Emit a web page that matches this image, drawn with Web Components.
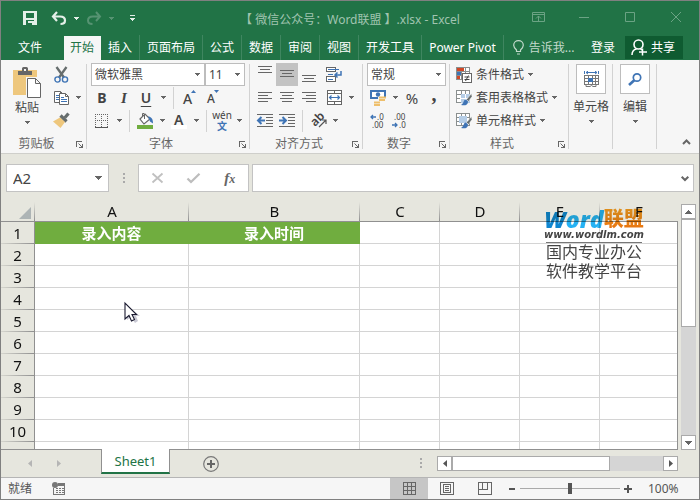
<!DOCTYPE html>
<html lang="zh-CN">
<head>
<meta charset="utf-8">
<title>【 微信公众号：Word联盟 】.xlsx - Excel</title>
<style>
html,body{height:100%;margin:0}
body{font:12px/16px "Noto Sans","Noto Sans CJK SC",sans-serif;color:#444;overflow:hidden}
</style>
</head>
<body>
<excel-window>
  <title-bar slot="title">【 微信公众号：Word联盟 】.xlsx - Excel</title-bar>
  <ribbon-tabs slot="tabs"></ribbon-tabs>
  <excel-ribbon slot="ribbon"></excel-ribbon>
  <formula-bar slot="formula"></formula-bar>
  <sheet-view slot="sheet"></sheet-view>
  <sheet-tabs slot="sheets"></sheet-tabs>
  <status-bar slot="status"></status-bar>
</excel-window>

<script>
const H = 'shape-rendering="crispEdges"';
const lines = (rows, x = 0) => `<path ${H} stroke="#666" d="${rows.map(([y, a, b]) => `M${a + x} ${y + .5}H${b + x}`).join('')}"/>`;
const doc = '<path d="M.5.5h6l3 3v8h-9z" fill="#fff" stroke="#666"/><path d="M6.500.5v3h3" fill="none" stroke="#666"/><path d="M2 4.500h3M2 6.500h6M2 8.500h6" stroke="#3f74b5"/>';
const table = '<path '+H+' d="M.5.500h13v12h-13zM.5 4.500h13M.5 8.500h13M5.500.5v12M9.500.5v12" fill="#fff" stroke="#8a8f8f"/>';
const brush = '<path d="M15.500 3.500l-5 6 2 2 3.500-5z" fill="#666d6d" stroke="#fff" stroke-width=".5"/><path d="M10 9.500c-3 .5-2 4-5 5.500 4 1 7 0 7-3.500z" fill="#3f74b5"/>';
const ICONS = {
  caret: [5, 3, '<path d="M0 0h5v1H4v1H3v1H2V2H1V1H0z" fill="currentColor" shape-rendering="crispEdges"/>'],
  save: [14, 14, '<path d="M0 0h14v14H0z" fill="#e4efe8"/><path d="M3 2h8v5H3zM3 9h8v5H3z" fill="#217346"/><path d="M5 10h6v4H7v-2H5z" fill="#e4efe8"/><path d="M7 12h2v2H7zM3 9h8v1H3z" fill="#217346"/>'],
  undo: [14, 13, '<path d="M5 0L1 4.500l4 4.500M1.500 4.500H8c3 0 5 1.500 5 4 0 2-1.500 3.500-4.500 3.500" fill="none" stroke="currentColor" stroke-width="2.200"/>'],
  redo: [14, 13, '<path d="M9 0l4 4.500L9 9M12.500 4.500H6c-3 0-5 1.500-5 4C1 10.500 2.500 12 5.500 12" fill="none" stroke="currentColor" stroke-width="2"/>'],
  custom: [5, 6, '<path d="M0 0h5v1H0zM0 3h5v1H4v1H3v1H2V5H1V4H0z" fill="currentColor" shape-rendering="crispEdges"/>'],
  display: [13, 10, '<path d="M.5.500h12v9H.5zM.5 2.500h12M6.500 4v5M4 6.500L6.500 4 9 6.500" fill="none" stroke="currentColor"/>'],
  min: [10, 10, '<path d="M0 5.500h10" stroke="currentColor"/>'],
  max: [10, 10, '<path d="M.5.500h9v9H.5z" fill="none" stroke="currentColor"/>'],
  close: [10, 10, '<path d="M0 0l10 10M10 0L0 10" stroke="currentColor"/>'],
  bulb: [11, 15, '<path d="M3.500 11.500V10C2 8.500.7 7 .7 5.200a4.800 4.500 0 0 1 9.600 0C10.300 7 9 8.500 7.500 10v1.500zM4 14h3" fill="none" stroke="currentColor" stroke-width="1.200"/>'],
  share: [16, 17, '<circle cx="7.500" cy="5.500" r="4.500" fill="none" stroke="#fff" stroke-width="1.600"/><path d="M1 16c0-3.500 2-5.500 4.500-6M9.500 10l1.500 1M11.500 9.500v7M8 13h8" fill="none" stroke="#fff" stroke-width="1.500"/>'],
  paste: [28, 31, '<path d="M0 3h24v25H0z" fill="#eec77d"/><path d="M5 8V4h4V1.500Q9 0 10.500 0h3Q15 0 15 1.500V4h4v4z" fill="#666"/><path d="M11 2h2v2h-2z" fill="#f6f6f6"/><path d="M13 10h11l5 5v17H13z" fill="#f6f6f6"/><path d="M14.500 11.500h8l5 5v14h-13zM22.500 11.500v5h5" fill="#fff" stroke="#666"/>'],
  cut: [15, 16, '<path d="M2.500 0L10 10.500M12.500 0L5 10.500" stroke="#666d6d" stroke-width="2.300"/><circle cx="3.500" cy="12.500" r="2.600" fill="none" stroke="#3f74b5" stroke-width="1.400"/><circle cx="11" cy="12.500" r="2.600" fill="none" stroke="#3f74b5" stroke-width="1.400"/>'],
  copy: [15, 14, `${doc}<g transform="translate(5 2)">${doc}</g>`],
  painter: [16, 15, '<path d="M15.500.5l-3.500 4M7.500 2.500l6 6" stroke="#666d6d" stroke-width="3.200"/><path d="M7 4.500L0 8.500l7.500 6.500 4.500-6z" fill="#eec77d"/>'],
  border: [14, 14, '<path '+H+' d="M.5 0v13M6.500 0v13M12.500 0v13M0 .5h13M0 6.500h13" stroke="#666" stroke-dasharray="1 1"/><path '+H+' d="M0 13.500h13" stroke="#555"/>'],
  fill: [17, 16, '<path d="M3 6l5-5 5 5-6 5z" fill="#fff" stroke="#666" stroke-width="1.200"/><path d="M7.500 6V1.500q0-1.500-2-1V4" fill="none" stroke="#666"/><path d="M11 3.500c3 0 5 2 5 7l-3-2z" fill="#3f74b5"/><path '+H+' d="M0 12h16v4H0z" fill="#70ad3f"/>'],
  grow: [14, 15, '<text x="0" y="14" font-size="14" font-weight="500" fill="#444">A</text><path d="M8 3l2.500-3L13 3z" fill="#3f74b5"/>'],
  shrink: [14, 15, '<text x="0" y="13" font-size="12" font-weight="500" fill="#444">A</text><path d="M7 0h5L9.500 3z" fill="#3f74b5"/>'],
  fontcolor: [16, 16, '<path d="M0 12h16v4H0z" fill="#fff"/><text x="3" y="12" font-size="14" fill="#444" font-weight="600">A</text>'],
  top: [14, 17, lines([[0,0,14],[3,2,12],[6,0,14]])],
  middle: [14, 17, lines([[4,0,14],[7,2,12],[10,0,14]])],
  bottom: [14, 17, lines([[9,0,14],[12,2,12],[15,0,14]])],
  left: [14, 11, lines([[0,0,14],[3,0,10],[6,0,14],[9,0,10]])],
  center: [14, 11, lines([[0,0,14],[3,2,12],[6,0,14],[9,2,12]])],
  right: [14, 11, lines([[0,0,14],[3,4,14],[6,0,14],[9,4,14]])],
  outdent: [16, 13, lines([[0,0,16],[3,9,16],[6,9,16],[9,9,16],[12,0,16]])+'<path d="M8 6.500H1M4.500 3L1 6.500 4.500 10" fill="none" stroke="#3f74b5" stroke-width="2"/>'],
  indent: [16, 13, lines([[0,0,16],[3,9,16],[6,9,16],[9,9,16],[12,0,16]])+'<path d="M0 6.500h7M3.500 3L7 6.500 3.500 10" fill="none" stroke="#3f74b5" stroke-width="2"/>'],
  wrap: [16, 15, '<path '+H+' d="M.5.500h9v4h-9zM.5 9.500h9v5h-9z" fill="#fff" stroke="#666"/><path '+H+' d="M2 2.500h11M2 7.500h5M2 12.500h5" stroke="#3f74b5"/><path d="M15 4v4H9M11.500 5.500L9 8l2.500 2.500" fill="none" stroke="#3f74b5" stroke-width="1.500"/>'],
  merge: [15, 15, '<path '+H+' d="M.5.500h14v14H.5zM0 3.500h15M0 11.500h15M7.500 0v3M7.500 12v3" fill="#fff" stroke="#666"/><path d="M2.500 7.500h10M4.500 5.500l-2 2 2 2M10.500 5.500l2 2-2 2" fill="none" stroke="#3f74b5" stroke-width="1.200"/>'],
  orient: [17, 15, '<text x="0" y="0" font-size="12" fill="#444" font-weight="600" transform="translate(5 14) rotate(-45)">ab</text><path d="M9 14l7-7M12 7h4v4" fill="none" stroke="#555" stroke-width="1.200"/>'],
  money: [16, 16, '<path '+H+' d="M0 0h16v9H0z" fill="#3f74b5"/><path d="M2 2h12v5H2z" fill="#fff"/><circle cx="8" cy="4.500" r="2.200" fill="#3f74b5"/><path d="M8 7h8v8H5v-4h3z" fill="#f6f6f6"/><path d="M9 7.500h7M9 10h6M4 12.500h6M4 15h6" stroke="#eebf6c" stroke-width="1.800"/>'],
  decup: [16, 14, '<text x="7" y="6" font-size="8" fill="#444">.0</text><text x="2" y="14" font-size="8" fill="#444">.00</text><path d="M6 3H1M3 1L1 3l2 2" fill="none" stroke="#3f74b5" stroke-width="1.300"/>'],
  decdown: [16, 14, '<text x="2" y="6" font-size="8" fill="#444">.00</text><text x="7" y="14" font-size="8" fill="#444">.0</text><path d="M0 11h5M3 9l2 2-2 2" fill="none" stroke="#3f74b5" stroke-width="1.300"/>'],
  cond: [16, 16, table+'<path d="M1 1h7v3H1zM1 9h3v3H1z" fill="#d24726"/><path d="M1 5h4v3H1z" fill="#3f74b5"/><path '+H+' d="M6.500 6.500h9v9h-9z" fill="#fff" stroke="#666"/><path d="M8.500 10h5M8.500 12.500h5M12.500 8.500l-3 5.500" stroke="#444"/>'],
  tablefmt: [16, 16, table+'<path d="M5 4h9v9H5z" fill="#b5cde6"/><path '+H+' d="M4 8.500h9M9.500 4v9" stroke="#fff"/>'+brush],
  cellfmt: [16, 16, table+'<path d="M3 3h8v7H3z" fill="#b5cde6"/>'+brush],
  cells: [15, 17, '<path d="M.5 0v3M14.500 0v3M2 1.500h11M4 .2L2 1.500 4 3M11 .2l2 1.300L11 3" fill="none" stroke="#3f74b5"/><path '+H+' d="M.5 4.500h14v9H.5zM.5 7.500h14M.5 10.500h14M4.500 4.500v9M8.500 4.500v9M11.500 4.500v9" fill="#fff" stroke="#777"/><path d="M4 7h5v4H4z" fill="#3f74b5"/><path d="M2 13v2.500h4l1.500-1 1.500 1h3V13" fill="none" stroke="#777"/>'],
  find: [14, 13, '<circle cx="9" cy="4.500" r="3.700" fill="#fff" stroke="#3f74b5" stroke-width="1.700"/><path d="M6.300 7.200L1 12" stroke="#3f74b5" stroke-width="2.600"/>'],
  launcher: [7, 7, '<path '+H+' d="M.5 6V.5H6M6.500 3v4M3 6.500h4M5.500 5v1" fill="none" stroke="#666"/><path d="M2.500 2.500l3.500 3.500" stroke="#666"/>'],
  collapse: [9, 6, '<path d="M1 5l3.500-3.500L8 5" fill="none" stroke="#666" stroke-width="2"/>'],
  expand: [8, 5, '<path d="M.7.700L4 4 7.300.7" fill="none" stroke="#666" stroke-width="2"/>'],
  cancel: [11, 10, '<path d="M.5.500l10 9M10.500.5l-10 9" stroke="#c0c0c0" stroke-width="1.800"/>'],
  enter: [13, 10, '<path d="M.5 5.500l3.500 3.500L12.500.7" fill="none" stroke="#bdbdbd" stroke-width="2.300"/>'],
  dots: [2, 11, '<path d="M0 0h2v2H0zM0 4h2v2H0zM0 8h2v2H0z" fill="#aaa"/>'],
  corner: [12, 12, '<path d="M12 0v12H0z" fill="#adb4b5"/>'],
  up: [7, 4, '<path d="M3 0h1v1h1v1h1v1h1v1H0V3h1V2h1V1h1z" fill="#666" shape-rendering="crispEdges"/>'],
  down: [7, 4, '<path d="M3 4h1V3h1V2h1V1h1V0H0v1h1v1h1v1h1z" fill="#666" shape-rendering="crispEdges"/>'],
  prev: [4, 7, '<path d="M4 0v7L0 3.500z" fill="currentColor"/>'],
  next: [4, 7, '<path d="M0 0v7l4-3.500z" fill="currentColor"/>'],
  add: [16, 16, '<circle cx="8" cy="8" r="7.300" fill="none" stroke="#777" stroke-width="1.200"/><path d="M4 8h8M8 4v8" stroke="#666" stroke-width="2"/>'],
  macro: [13, 13, '<path '+H+' d="M6 1h7v3H6z" fill="#777"/><path '+H+' d="M1.500 6v6.500h11V4" fill="none" stroke="#777"/><circle cx="3" cy="3" r="3" fill="#777"/><path '+H+' d="M4 6.500h8M4 8.500h8M4 10.500h8" stroke="#777" stroke-dasharray="2 1"/>'],
  normal: [13, 13, '<path '+H+' d="M.5.500h12v12H.5zM.5 4.500h12M.5 8.500h12M4.500.5v12M8.500.5v12" fill="none" stroke="#666"/>'],
  layout: [14, 13, '<path '+H+' d="M.5.500h13v12H.5zM3.500 2.500h7v8h-7zM5 4.500h4M5 6.500h4M5 8.500h4" fill="none" stroke="#666"/>'],
  pagebreak: [14, 13, '<path '+H+' d="M.5.500h13v12H.5zM4.500.5v7M9.500.5v7M.5 7.500h9" fill="none" stroke="#666"/>'],
  minus: [8, 8, '<path '+H+' d="M1 3h6v2H1z" fill="#555"/>'],
  plus: [8, 8, '<path '+H+' d="M0 3h8v2H0zM3 0h2v8H3z" fill="#555"/>'],
  pointer: [18, 24, '<path d="M3 4v14l4-3 4 6 3-2-2-5h4z" fill="#8888a0" opacity=".45"/><path d="M1 1v16l4-3.500 2.500 5.500 3-1.500L8 12.500h4.500z" fill="#fff" stroke="#1a1a30" stroke-width="1.100"/>']
};

customElements.define('x-icon', class extends HTMLElement {
  connectedCallback() {
    const [w, h, body] = ICONS[this.getAttribute('name')];
    this.attachShadow({mode: 'open'}).innerHTML =
      `<style>:host{display:inline-flex;flex:none}svg{display:block;overflow:visible}</style>
       <svg width="${w}" height="${h}" viewBox="0 0 ${w} ${h}" aria-hidden="true">${body}</svg>`;
  }
});
const icon = name => `<x-icon name="${name}"></x-icon>`;
const RESET = `:host,*{box-sizing:border-box}button,input,select{font:inherit;color:inherit;margin:0;padding:0;border:0;border-radius:0;background:none;outline:none}`;
const define = (name, html) => {
  const tpl = document.createElement('template');
  tpl.innerHTML = `<style>${RESET}</style>${html}`;
  customElements.define(name, class extends HTMLElement {
    constructor() { super(); this.attachShadow({mode: 'open'}).append(tpl.content.cloneNode(true)); }
    connectedCallback() {
      const label = this.getAttribute('label'), b = this.shadowRoot.querySelector('[data-label]');
      if (label && b) b.setAttribute('aria-label', label);
    }
  });
};

/* Ribbon pieces */
define('tool-button', `<style>
:host{display:flex;width:22px;height:23px}
:host([wide]){width:auto}:host([big]){width:auto;height:auto}:host([arrow]){width:12px}:host([large]){width:24px}
:host([active]){background:#c3c3c3}
button{display:flex;flex:1;align-items:center;justify-content:center;gap:4px;white-space:nowrap}
:host([big]) button{flex-direction:column;justify-content:flex-start}
</style><button data-label><slot></slot></button>`);

define('tool-row', `<style>:host{display:flex;height:23px;align-items:center}</style><slot></slot>`);
define('tool-rule', `<style>:host{width:1px;height:22px;margin:0 4px;background:#d2d2d2}</style>`);
define('ribbon-group', `<style>
:host{display:flex;flex-direction:column;position:relative;padding-top:3px}
:host::after{content:"";position:absolute;right:0;top:4px;bottom:4px;width:1px;background:#d2d2d2}
.body{height:69px;display:flex;padding:0 4px}
footer{height:21px;display:flex;align-items:center;color:#666}
.name{flex:1;text-align:center;padding-top:2px}
button{width:14px;height:16px;display:flex;align-items:center;justify-content:center;margin-right:1px}
footer button{padding-top:4px}
:host([plain]) button{display:none}:host([plain]) .body{justify-content:center}
</style><div class="body"><slot></slot></div>
<footer><span class="name"><slot name="name"></slot></span><button aria-label="对话框启动器">${icon('launcher')}</button></footer>`);

customElements.define('drop-down', class extends HTMLElement {
  connectedCallback() {
    this.attachShadow({mode: 'open'}).innerHTML = `<style>${RESET}
:host{display:flex;height:23px;position:relative;color:#444}
select{width:100%;height:100%;padding:0 16px 0 3px;appearance:none;background:#fff;border:1px solid #bdbdbd}
x-icon{position:absolute;right:5px;top:10px;color:#666;pointer-events:none}
</style><select aria-label="${this.getAttribute('label')}"><option>${this.getAttribute('value')}</option></select>${icon('caret')}`;
  }
});

const tb = (label, name, attrs = '') => `<tool-button label="${label}" ${attrs}>${icon(name)}</tool-button>`;
const arrow = label => tb(label + '选项', 'caret', 'arrow');

define('title-bar', `<style>
:host{display:grid;grid-template-columns:1fr auto 1fr;align-items:center;height:34px;background:#217346;color:#a0c4b0;white-space:pre;padding-top:2px}
.quick{display:flex;align-items:center;padding-left:18px;padding-bottom:4px;color:#e4efe8}
.quick button{width:22px;height:24px;display:flex;align-items:center;justify-content:center}
.quick .arrow{width:13px}.quick .gap{margin-left:7px}.quick .dim{color:#569372}
.quick .more{margin-left:8px}
.frame{display:flex;justify-content:flex-end;color:#6ba384;padding-bottom:6px}
.frame button{width:46px;height:28px;display:flex;align-items:center;justify-content:center}
</style>
<div class="quick"><button aria-label="保存">${icon('save')}</button><button class="gap" aria-label="撤消">${icon('undo')}</button><button class="arrow" aria-label="撤消列表">${icon('caret')}</button><button class="dim" aria-label="恢复">${icon('redo')}</button><button class="arrow dim" aria-label="恢复列表">${icon('caret')}</button><button class="more arrow" aria-label="自定义快速访问工具栏">${icon('custom')}</button></div>
<span><slot></slot></span>
<div class="frame"><button aria-label="功能区显示选项">${icon('display')}</button><button aria-label="最小化">${icon('min')}</button><button aria-label="最大化">${icon('max')}</button><button aria-label="关闭">${icon('close')}</button></div>`);

define('ribbon-tabs', `<style>
:host{display:flex;height:25px;background:#217346;color:#fff;padding-right:16px}
nav{display:flex;padding-left:10px}
button{display:flex;align-items:center;gap:5px;white-space:nowrap}
nav button{padding:0 7px;border-right:1px solid #3f8660}
nav .file{width:53px;border:0;padding:0 7px}
nav .on{background:#f6f6f6;color:#217346;border:0;margin-top:1px;padding-left:6px}
.tell{margin-left:9px;color:#c3dacc}.login{margin-left:auto;margin-right:10px}
.share{background:#0f5b31;padding:0 8px 0 6px;margin-top:1px;margin-bottom:1px;gap:4px}
</style><nav><button class="file">文件</button><button class="on">开始</button><button>插入</button><button>页面布局</button><button>公式</button><button>数据</button><button>审阅</button><button>视图</button><button>开发工具</button><button>Power Pivot</button></nav>
<button class="tell">${icon('bulb')}告诉我...</button><button class="login">登录</button><button class="share">${icon('share')}共享</button>`);

define('excel-ribbon', `<style>
:host{display:flex;height:94px;background:#f6f6f6;border-bottom:1px solid #cfcfcb;color:#444}
x-icon[name=caret]{color:#666}
.clip{width:86px}.font{width:163px}.align{width:113px}.num{width:87px}.style{width:119px}.one{width:44px}
.col{display:flex;flex-direction:column}
.big{margin-left:8px;margin-right:9px;width:28px;padding-top:4px}
.label{height:16px}
.font .name{width:114px}.font .size{width:40px}
.num drop-down{width:79px}
b,i,u{font-size:14px}i{font-family:"Liberation Serif",serif;font-weight:bold;font-size:15px}u{font-weight:600;text-underline-offset:3px}
.pinyin{display:flex;flex-direction:column;align-items:center;font-size:10px;line-height:11px}
.pinyin span+span{color:#3f74b5;font-weight:bold}
.sign{font-size:15px}.comma{font:bold 20px/10px "Liberation Serif",serif;height:18px}
.gap{margin-left:3px}
.style tool-row{padding-left:2px}
.box{display:flex;width:30px;height:30px;align-items:center;justify-content:center;background:#fff;border:1px solid #bdbdbd}
.tile{display:flex;flex-direction:column;align-items:center;gap:5px;padding-top:1px}
.paste{display:flex;flex-direction:column;align-items:center;gap:2px}
.paste x-icon[name=caret]{margin-top:3px}
.end{margin-left:auto;align-self:flex-end;padding:0 4px 0 0}
</style>
<ribbon-group class="clip">
  <tool-button class="big" big label="粘贴"><span class="paste">${icon('paste')}<span class="label">粘贴</span>${icon('caret')}</span></tool-button>
  <div class="col"><tool-row>${tb('剪切','cut')}</tool-row><tool-row>${tb('复制','copy')}${arrow('复制')}</tool-row><tool-row>${tb('格式刷','painter')}</tool-row></div>
  <span slot="name">剪贴板</span>
</ribbon-group>
<ribbon-group class="font"><div class="col">
  <tool-row><drop-down class="name" label="字体" value="微软雅黑"></drop-down><drop-down class="size" label="字号" value="11"></drop-down></tool-row>
  <tool-row><tool-button label="加粗"><b>B</b></tool-button><tool-button label="倾斜"><i>I</i></tool-button><tool-button label="下划线"><u>U</u></tool-button>${arrow('下划线')}<tool-rule></tool-rule>${tb('增大字号','grow','large')}${tb('减小字号','shrink','large')}</tool-row>
  <tool-row>${tb('边框','border')}${arrow('边框')}<tool-rule></tool-rule>${tb('填充颜色','fill')}${arrow('填充颜色')}${tb('字体颜色','fontcolor')}${arrow('字体颜色')}<tool-rule></tool-rule><tool-button label="拼音"><span class="pinyin"><span>wén</span><span>文</span></span></tool-button>${arrow('拼音')}</tool-row></div>
  <span slot="name">字体</span>
</ribbon-group>
<ribbon-group class="align"><div class="col">
  <tool-row>${tb('顶端对齐','top')}${tb('垂直居中','middle','active')}${tb('底端对齐','bottom')}${tb('自动换行','wrap','class="gap"')}</tool-row>
  <tool-row>${tb('左对齐','left')}${tb('居中','center')}${tb('右对齐','right')}${tb('合并后居中','merge','class="gap"')}${arrow('合并')}</tool-row>
  <tool-row>${tb('减少缩进','outdent')}${tb('增加缩进','indent')}<tool-rule></tool-rule>${tb('方向','orient')}${arrow('方向')}</tool-row></div>
  <span slot="name">对齐方式</span>
</ribbon-group>
<ribbon-group class="num"><div class="col">
  <tool-row><drop-down label="数字格式" value="常规"></drop-down></tool-row>
  <tool-row>${tb('会计数字格式','money')}${arrow('会计数字格式')}<tool-button label="百分比样式"><span class="sign">%</span></tool-button><tool-button label="千位分隔样式"><span class="comma">,</span></tool-button></tool-row>
  <tool-row>${tb('增加小数位数','decup')}${tb('减少小数位数','decdown')}</tool-row></div>
  <span slot="name">数字</span>
</ribbon-group>
<ribbon-group class="style"><div class="col">
  <tool-row><tool-button wide>${icon('cond')}<span>条件格式</span>${icon('caret')}</tool-button></tool-row>
  <tool-row><tool-button wide>${icon('tablefmt')}<span>套用表格格式</span>${icon('caret')}</tool-button></tool-row>
  <tool-row><tool-button wide>${icon('cellfmt')}<span>单元格样式</span>${icon('caret')}</tool-button></tool-row></div>
  <span slot="name">样式</span>
</ribbon-group>
<ribbon-group class="one" plain><tool-button big><span class="tile"><span class="box">${icon('cells')}</span><span class="label">单元格</span>${icon('caret')}</span></tool-button></ribbon-group>
<ribbon-group class="one" plain><tool-button big><span class="tile"><span class="box">${icon('find')}</span><span class="label">编辑</span>${icon('caret')}</span></tool-button></ribbon-group>
${tb('折叠功能区','collapse','class="end"')}`);

define('formula-bar', `<style>
:host{display:flex;height:48px;padding:10px 5px 10px 5px;background:#e6e6de;color:#444}
.box{display:flex;align-items:center;background:#fff;border:1px solid #c3c3c3}
.name{width:103px}.name input{width:81px;height:26px;padding-left:6px;font-size:15px}
.name button{width:20px;height:26px;display:flex;align-items:center;justify-content:center;color:#777}
.grip{width:29px;display:flex;align-items:center;justify-content:center}
.act{width:111px;margin-right:3px}.act button{flex:1;height:26px;display:flex;align-items:center;justify-content:center}
.fx{font:italic bold 15px "Liberation Serif",serif;color:#666}.fx small{font-size:12px}
.edit{flex:1}.edit input{flex:1;height:26px;min-width:0;padding:0 6px}.edit button{width:16px;height:26px;display:flex;align-items:center;justify-content:center}
</style>
<div class="box name"><input aria-label="名称框" value="A2"><button aria-label="名称列表">${icon('down')}</button></div>
<span class="grip">${icon('dots')}</span>
<div class="box act"><button aria-label="取消">${icon('cancel')}</button><button aria-label="输入">${icon('enter')}</button><button class="fx" aria-label="插入函数"><span>f<small>x</small></span></button></div>
<div class="box edit"><input aria-label="编辑栏"><button aria-label="展开编辑栏">${icon('expand')}</button></div>`);

define('scroll-bar', `<style>
:host{display:flex;background:#d5d5d5}
:host([vertical]){flex-direction:column;width:15px}
:host(:not([vertical])){height:15px}
button{width:15px;height:15px;flex:none;background:#fff;border:1px solid #aaa;display:flex;align-items:center;justify-content:center;color:#555}
.track{flex:1;display:flex;flex-direction:inherit}
.thumb{background:#fff;border:1px solid #aaa;flex-basis:var(--thumb,50%)}
</style><button aria-label="向前滚动"><slot name="back"></slot></button><div class="track"><div class="thumb"></div></div><button aria-label="向后滚动"><slot name="forward"></slot></button>`);

define('site-mark', `<style>
:host{display:block;width:102px;color:#444;mix-blend-mode:multiply;pointer-events:none}
.brand{display:flex;align-items:center;justify-content:center;height:22px;line-height:22px}
.word{font:italic 800 23px/22px "Open Sans",sans-serif;background:linear-gradient(90deg,#0f86d0 0 38%,#25b2f4 38%);-webkit-background-clip:text;color:transparent}
.union{font-weight:900;font-size:20px;background:linear-gradient(#f7a021,#e4700e);-webkit-background-clip:text;color:transparent}
.url{font:italic bold 10px/10px "DejaVu Sans",sans-serif;display:flex;justify-content:center;padding-bottom:2px;border-bottom:1px solid #777;margin:0 3px}
.line{font-size:16px;line-height:19px;text-align:center;white-space:nowrap}
</style><div class="brand"><span class="word">Word</span><span class="union">联盟</span></div><div class="url">www.wordlm.com</div><div class="line">国内专业办公</div><div class="line">软件教学平台</div>`);

const body = Array.from({length: 11}, (_, r) =>
  `<tr><th scope="row">${r + 1}</th>${['录入内容', '录入时间', '', '', '', ''].map(t => r === 0 && t ? `<td class="head">${t}</td>` : '<td></td>').join('')}</tr>`).join('');
define('sheet-view', `<style>
:host{display:flex;flex:1;min-height:0;background:#e6e6de;padding-right:3px;position:relative;isolation:isolate}
.pane{flex:1;overflow:hidden;position:relative;border-bottom:1px solid #909090;margin-right:3px}
.pane::after{content:"";position:absolute;right:0;top:19px;bottom:0;width:1px;background:#909090}
table{width:100%;table-layout:fixed;border-collapse:separate;border-spacing:0;font-size:15px;line-height:20px;color:#111}
th,td{padding:0;text-align:center;font-weight:normal;overflow:hidden}
thead th{height:20px;line-height:19px;border-bottom:1px solid #909090;background:linear-gradient(#e6e6de00,#909090) right/1px 100% no-repeat #e6e6de}
thead th:last-child{background:#e6e6de}
thead x-icon{margin:2px 0 0 18px;display:flex}
tbody th{height:22px;border-right:1px solid #909090;background:linear-gradient(90deg,#d5d5ce,#909090) bottom/100% 1px no-repeat #e6e6de}
td{height:22px;background:#fff;border-right:1px solid #d4d4d4;border-bottom:1px solid #d4d4d4}
.head{background:#70ad3f;border-color:#70ad3f;color:#fff;font-weight:bold}
scroll-bar{margin:2px 0 0}
site-mark{position:absolute;right:54px;top:6px}
.pointer{position:absolute;left:123px;top:100px}
</style>
<div class="pane"><table><colgroup><col style="width:34px"><col style="width:154px"><col style="width:171px"><col style="width:80px"><col style="width:80px"><col style="width:80px"><col></colgroup>
<thead><tr><th aria-label="全选">${icon('corner')}</th><th scope="col">A</th><th scope="col">B</th><th scope="col">C</th><th scope="col">D</th><th scope="col">E</th><th scope="col">F</th></tr></thead><tbody>${body}</tbody></table></div>
<scroll-bar vertical><x-icon slot="back" name="up"></x-icon><x-icon slot="forward" name="down"></x-icon></scroll-bar>
<site-mark></site-mark><x-icon class="pointer" name="pointer"></x-icon>`);

define('sheet-tabs', `<style>
:host{display:flex;height:27px;background:#e6e6de;padding-right:21px}
button{display:flex;align-items:center;justify-content:center}
.nav{width:29px;color:#b5b5b5}.nav:first-of-type{margin-left:14px}
.tab{width:69px;height:25px;margin:-1px 25px 0 28px;position:relative;background:#fff;color:#217346;border:solid #909090;border-width:0 1px;border-bottom:2px solid #217346;font-size:13px}
.add{width:32px}
.grip{margin:0 15px 0 auto;display:flex;align-items:center}
scroll-bar{width:36%;max-width:241px;margin-top:6px;--thumb:75%}
</style><button class="nav" aria-label="上一个工作表">${icon('prev')}</button><button class="nav" aria-label="下一个工作表">${icon('next')}</button>
<button class="tab">Sheet1</button><button class="add" aria-label="新工作表">${icon('add')}</button>
<span class="grip">${icon('dots')}</span><scroll-bar><x-icon slot="back" name="prev"></x-icon><x-icon slot="forward" name="next"></x-icon></scroll-bar>`);

define('status-bar', `<style>
:host{display:flex;align-items:center;height:22px;background:#f6f6f6;border-top:1px solid #b5b5b5;padding:0 19px 0 7px;color:#555}
button{height:21px;display:flex;align-items:center;justify-content:center}
.macro{margin-left:20px}.views{display:flex;margin-left:auto;margin-right:4px}.views button{width:38px}.views .on{background:#c6c6c6}
input{appearance:none;width:100px;height:11px;margin:0 4px;background:linear-gradient(#aaa,#aaa) center/100% 1px no-repeat}
input::-webkit-slider-thumb{appearance:none;width:4px;height:11px;background:#555}
output{margin-left:16px;width:32px}
</style><span>就绪</span><button class="macro" aria-label="录制宏">${icon('macro')}</button>
<div class="views"><button class="on" aria-label="普通">${icon('normal')}</button><button aria-label="页面布局">${icon('layout')}</button><button aria-label="分页预览">${icon('pagebreak')}</button></div>
<button aria-label="缩小">${icon('minus')}</button><input type="range" aria-label="缩放" min="0" max="100" value="50"><button aria-label="放大">${icon('plus')}</button><output>100%</output>`);

define('excel-window', `<style>
:host{display:flex;flex-direction:column;height:100vh;border:1px solid #808080}
::slotted(*){flex:none}
::slotted(sheet-view){flex:1}
</style><slot name="title"></slot><slot name="tabs"></slot><slot name="ribbon"></slot><slot name="formula"></slot><slot name="sheet"></slot><slot name="sheets"></slot><slot name="status"></slot>`);
</script>
</body>
</html>
